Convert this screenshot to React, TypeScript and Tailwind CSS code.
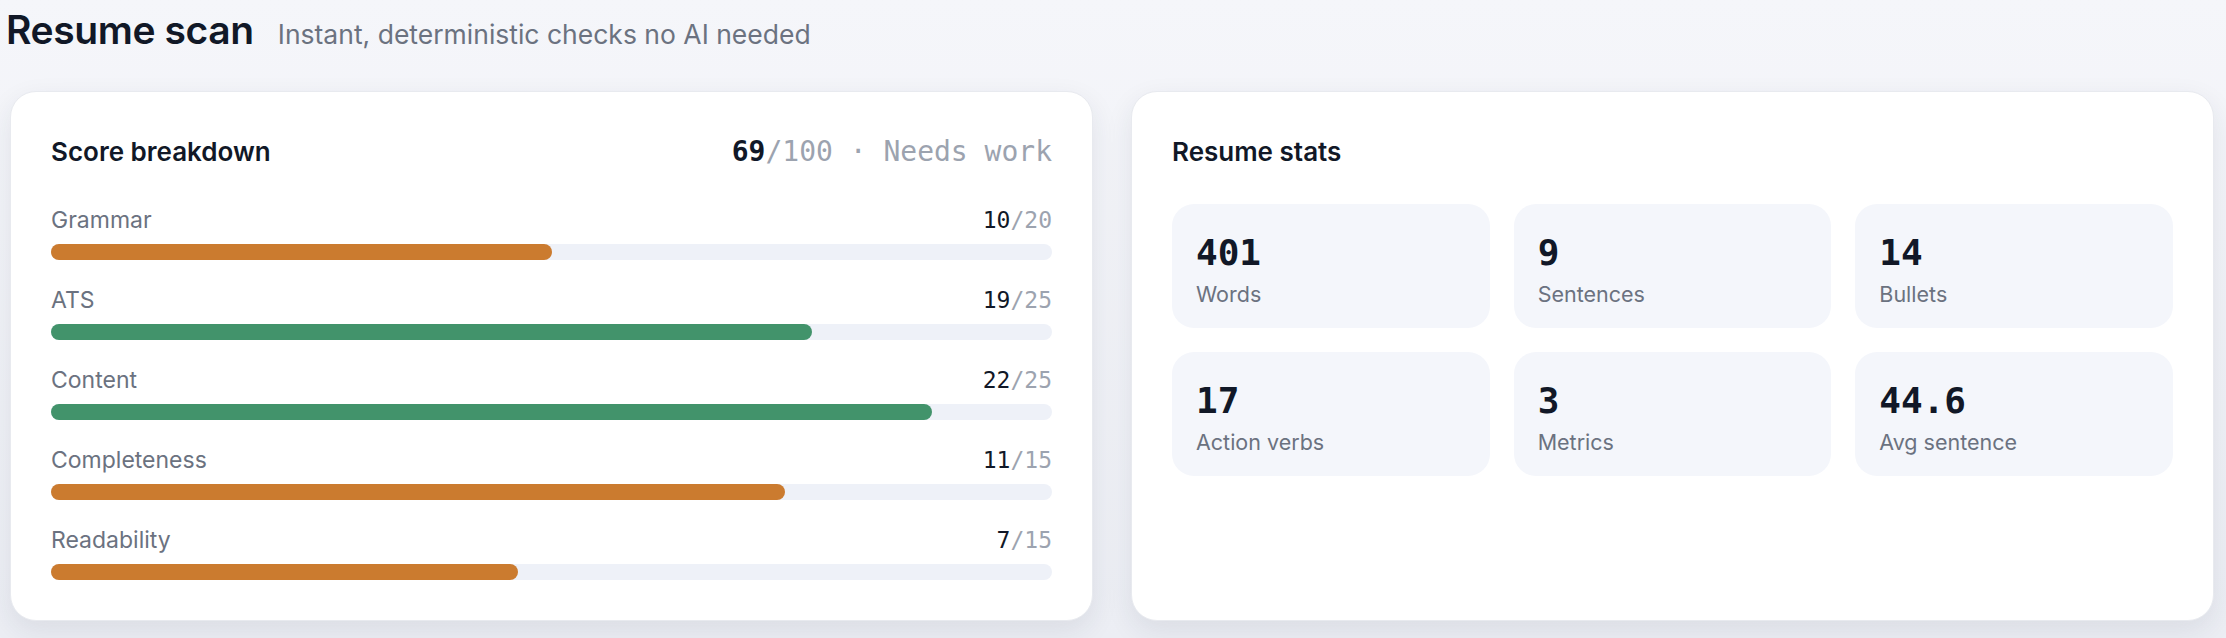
import React from "react"

type Category = { label: string; score: number; max: number }

const categories: Category[] = [
  { label: "Grammar", score: 10, max: 20 },
  { label: "ATS", score: 19, max: 25 },
  { label: "Content", score: 22, max: 25 },
  { label: "Completeness", score: 11, max: 15 },
  { label: "Readability", score: 7, max: 15 },
]

const stats = [
  { value: "401", label: "Words" },
  { value: "9", label: "Sentences" },
  { value: "14", label: "Bullets" },
  { value: "17", label: "Action verbs" },
  { value: "3", label: "Metrics" },
  { value: "44.6", label: "Avg sentence" },
]

const sans = "font-['Inter','Noto_Sans',sans-serif]"
const mono = "font-['DejaVu_Sans_Mono','Liberation_Mono',monospace]"

// bars go green once a category is at 75% or better
function barColor(score: number, max: number) {
  return score / max >= 0.75 ? "bg-[#42936b]" : "bg-[#cb7b2f]"
}

function ScoreRow({ label, score, max }: Category) {
  const pct = (score / max) * 100
  return (
    <div className="flex flex-col gap-2">
      <div className="flex items-baseline justify-between">
        <span className="text-[23px] leading-[32px] text-[#6b7280]">{label}</span>
        <span className={`${mono} text-[23px] leading-[28px]`}>
          <span className="text-[#111827]">{score}</span>
          <span className="text-[#9ca3af]">/{max}</span>
        </span>
      </div>
      <div className="h-4 w-full rounded-full bg-[#eef1f8]">
        <div className={`h-4 rounded-full ${barColor(score, max)}`} style={{ width: `${pct}%` }} />
      </div>
    </div>
  )
}

function Card({ children }: { children: React.ReactNode }) {
  return (
    <div className="rounded-[26px] border border-[#e8eaef] bg-white p-10 shadow-[0_10px_28px_rgba(30,41,70,0.09)]">
      {children}
    </div>
  )
}

export default function App() {
  const total = categories.reduce((sum, c) => sum + c.score, 0)

  return (
    <div className={`${sans} min-h-screen bg-gradient-to-b from-[#f5f6fa] to-[#eceef4] pl-[10px] pr-[12px] pt-[7px] text-[#111827]`}>
      <div className="-ml-[4px] flex items-baseline gap-6">
        <h1 className="text-[39px] font-semibold leading-[46px] tracking-[-0.01em] text-[#111827]">Resume scan</h1>
        <p className="text-[26.5px] leading-[30px] text-[#6b7280]">Instant, deterministic checks no AI needed</p>
      </div>

      <div className="mt-[38px] grid grid-cols-2 gap-[38px]">
        <Card>
          <div className="flex items-baseline justify-between">
            <h2 className="text-[26px] font-semibold leading-[40px]">Score breakdown</h2>
            <span className={`${mono} text-[28px] leading-[36px] text-[#9ca3af]`}>
              <span className="font-bold text-[#111827]">{total}</span>/100 · Needs work
            </span>
          </div>
          <div className="mt-8 flex flex-col gap-6">
            {categories.map(c => (
              <ScoreRow key={c.label} {...c} />
            ))}
          </div>
        </Card>

        <Card>
          <h2 className="text-[26px] font-semibold leading-[40px]">Resume stats</h2>
          <div className="mt-8 grid grid-cols-3 gap-6">
            {stats.map(s => (
              <div key={s.label} className="flex flex-col rounded-[22px] bg-[#f4f6fb] px-6 pb-[18px] pt-[27px]">
                <span className={`${mono} text-[36px] font-bold leading-[44px] text-[#111827]`}>{s.value}</span>
                <span className="mt-[3px] text-[21.5px] leading-[32px] text-[#6b7280]">{s.label}</span>
              </div>
            ))}
          </div>
        </Card>
      </div>
    </div>
  )
}
